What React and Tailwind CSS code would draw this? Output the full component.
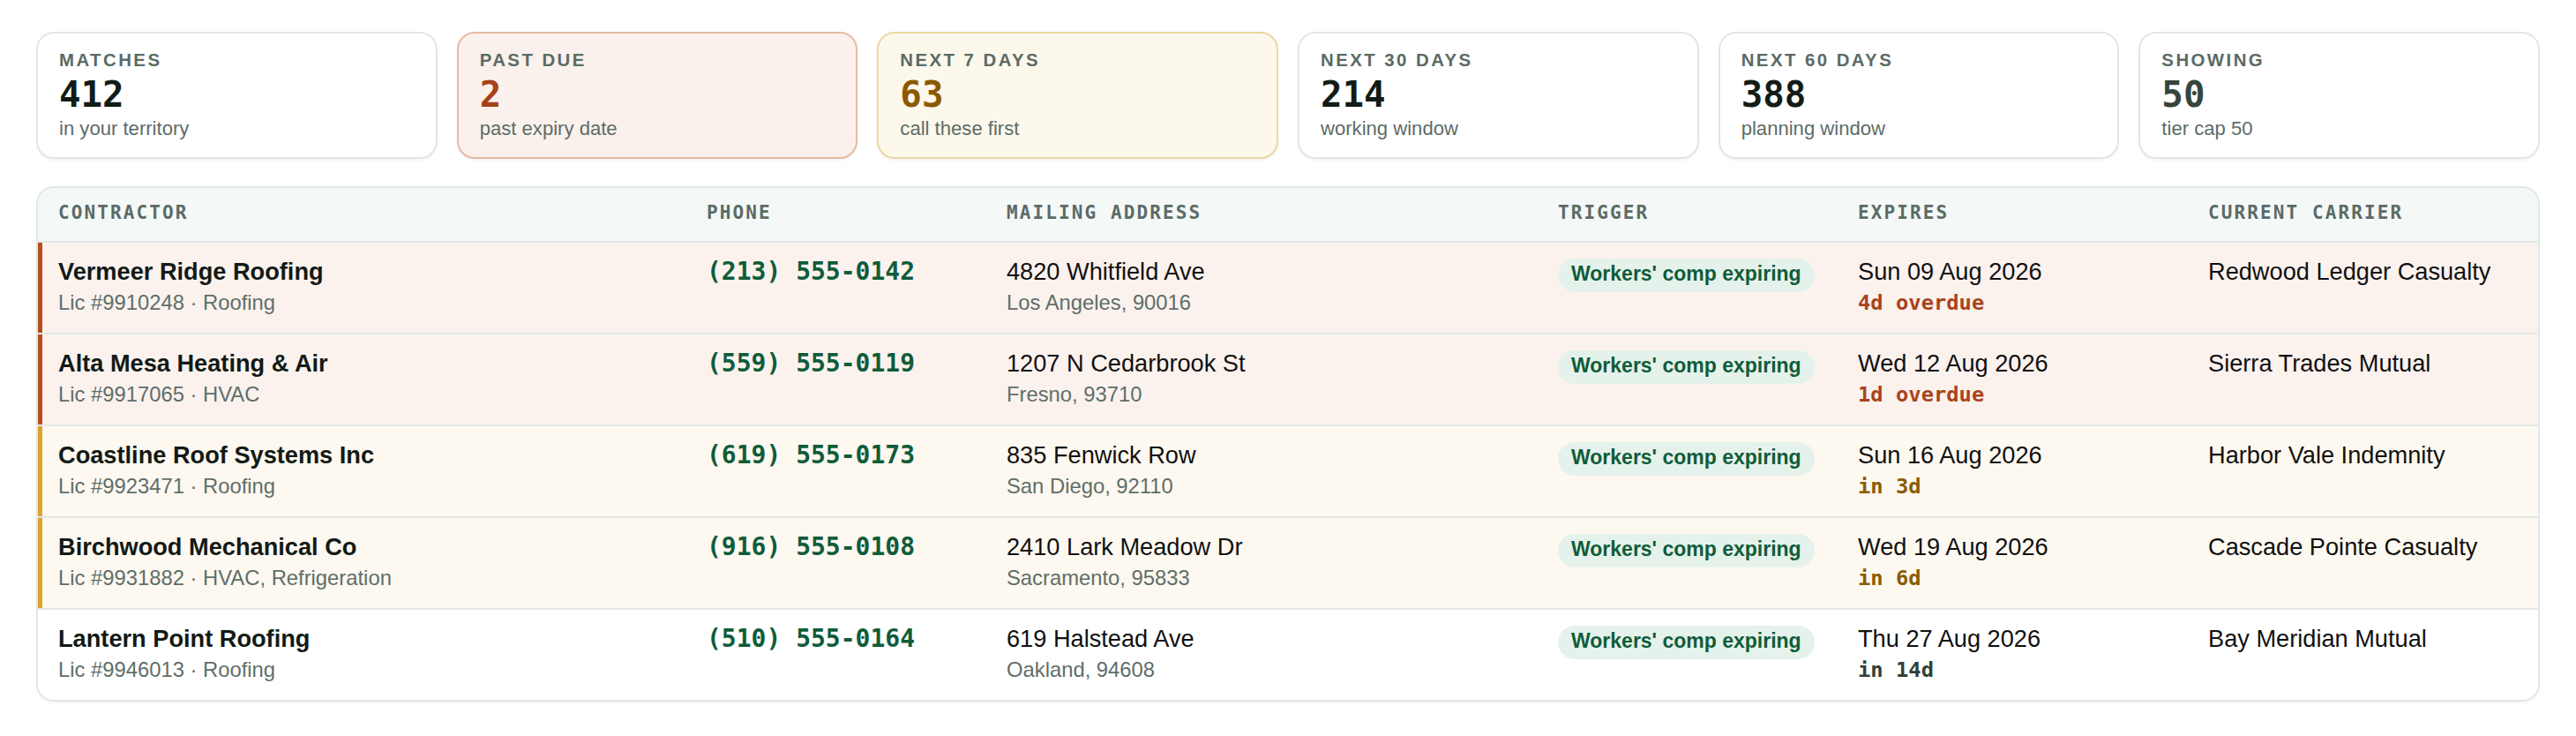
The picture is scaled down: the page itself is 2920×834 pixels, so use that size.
import React from "react";

const SANS = { fontFamily: '"Liberation Sans", Arial, sans-serif' };

const cards = [
  { label: "MATCHES", value: "412", sub: "in your territory", tone: "plain" },
  { label: "PAST DUE", value: "2", sub: "past expiry date", tone: "past" },
  { label: "NEXT 7 DAYS", value: "63", sub: "call these first", tone: "soon" },
  { label: "NEXT 30 DAYS", value: "214", sub: "working window", tone: "plain" },
  { label: "NEXT 60 DAYS", value: "388", sub: "planning window", tone: "plain" },
  { label: "SHOWING", value: "50", sub: "tier cap 50", tone: "muted" },
];

const cardBox = {
  plain: "bg-white border-[#dfe8e5]",
  muted: "bg-white border-[#dfe8e5]",
  past: "bg-[#fbf1ec] border-[#e8b9a4]",
  soon: "bg-[#fcf8ec] border-[#ecd6a2]",
};
const cardNum = {
  plain: "text-[#121c17]",
  muted: "text-[#34463c]",
  past: "text-[#a6421a]",
  soon: "text-[#8b5a00]",
};

const rows = [
  { name: "Vermeer Ridge Roofing", lic: "Lic #9910248 · Roofing", phone: "(213) 555-0142", addr: "4820 Whitfield Ave", city: "Los Angeles, 90016", date: "Sun 09 Aug 2026", due: "4d overdue", carrier: "Redwood Ledger Casualty", tone: "past" },
  { name: "Alta Mesa Heating & Air", lic: "Lic #9917065 · HVAC", phone: "(559) 555-0119", addr: "1207 N Cedarbrook St", city: "Fresno, 93710", date: "Wed 12 Aug 2026", due: "1d overdue", carrier: "Sierra Trades Mutual", tone: "past" },
  { name: "Coastline Roof Systems Inc", lic: "Lic #9923471 · Roofing", phone: "(619) 555-0173", addr: "835 Fenwick Row", city: "San Diego, 92110", date: "Sun 16 Aug 2026", due: "in 3d", carrier: "Harbor Vale Indemnity", tone: "soon" },
  { name: "Birchwood Mechanical Co", lic: "Lic #9931882 · HVAC, Refrigeration", phone: "(916) 555-0108", addr: "2410 Lark Meadow Dr", city: "Sacramento, 95833", date: "Wed 19 Aug 2026", due: "in 6d", carrier: "Cascade Pointe Casualty", tone: "soon" },
  { name: "Lantern Point Roofing", lic: "Lic #9946013 · Roofing", phone: "(510) 555-0164", addr: "619 Halstead Ave", city: "Oakland, 94608", date: "Thu 27 Aug 2026", due: "in 14d", carrier: "Bay Meridian Mutual", tone: "normal" },
];

const rowBox = {
  past: "bg-[#fbf2ee] shadow-[inset_5px_0_0_#b4501e]",
  soon: "bg-[#fdf8f0] shadow-[inset_5px_0_0_#d8a52f]",
  normal: "bg-white",
};
const dueColor = {
  past: "text-[#a8441a]",
  soon: "text-[#8a5c00]",
  normal: "text-[#2f3f37]",
};

const GRID = "grid grid-cols-[735px_340px_625px_340px_397px_1fr]";
const MONO = "font-['DejaVu_Sans_Mono',monospace]";

function Card({ c }) {
  return (
    <div className={`rounded-[20px] border-2 px-[24px] pt-[18px] pb-[19px] shadow-[0_2px_3px_rgba(30,50,40,0.05)] ${cardBox[c.tone]}`}>
      <div className="text-[20.4px] leading-[24px] font-bold tracking-[0.12em] text-[#5a6b65]">{c.label}</div>
      <div className={`${MONO} mt-[5px] text-[40.8px] leading-[44px] font-bold ${cardNum[c.tone]}`}>{c.value}</div>
      <div className="mt-[4px] text-[22.1px] leading-[26px] text-[#5d6c67]">{c.sub}</div>
    </div>
  );
}

const headers = ["CONTRACTOR", "PHONE", "MAILING ADDRESS", "TRIGGER", "EXPIRES", "CURRENT CARRIER"];

export default function App() {
  return (
    <div className="min-h-screen bg-white px-[41px] pt-[36px] pb-[39px]" style={SANS}>
      <div className="grid grid-cols-6 gap-[22px]">
        {cards.map((c) => (
          <Card key={c.label} c={c} />
        ))}
      </div>

      <div className="mt-[31px] overflow-hidden rounded-[20px] border-2 border-[#e1e9e6] bg-white shadow-[0_2px_3px_rgba(30,50,40,0.05)]">
        <div className={`${GRID} border-b-2 border-[#e1e9e6] bg-[#f4f8f7]`}>
          {headers.map((h) => (
            <div key={h} className={`${MONO} px-[23px] pt-[16px] pb-[19px] text-[21px] leading-[25px] font-bold tracking-[0.1em] text-[#5b6b66]`}>
              {h}
            </div>
          ))}
        </div>
        {rows.map((r, i) => (
          <div
            key={r.name}
            className={`${GRID} ${rowBox[r.tone]} ${i < rows.length - 1 ? "border-b-2 border-[#e1e9e6]" : ""}`}
          >
            <div className="px-[23px] pt-[16px] pb-[19px]">
              <div className="text-[27.2px] leading-[34px] font-bold text-[#121a16]">{r.name}</div>
              <div className="mt-[3px] text-[23.8px] leading-[30px] text-[#5f6e69]">{r.lic}</div>
            </div>
            <div className="px-[23px] pt-[16px]">
              <div className={`${MONO} text-[28px] leading-[34px] font-bold text-[#0f5c3a]`}>{r.phone}</div>
            </div>
            <div className="px-[23px] pt-[16px]">
              <div className="text-[27.2px] leading-[34px] text-[#111]">{r.addr}</div>
              <div className="mt-[3px] text-[23.8px] leading-[30px] text-[#5f6e69]">{r.city}</div>
            </div>
            <div className="px-[23px] pt-[18px]">
              <span className="inline-block rounded-full bg-[#e5f2eb] px-[15px] pt-[4px] pb-[8px] text-[23px] leading-[26px] font-bold text-[#0f5c3a]">
                Workers' comp expiring
              </span>
            </div>
            <div className="px-[23px] pt-[16px]">
              <div className="text-[27.2px] leading-[34px] text-[#111]">{r.date}</div>
              <div className={`${MONO} mt-[3px] text-[23.8px] leading-[30px] font-bold ${dueColor[r.tone]}`}>{r.due}</div>
            </div>
            <div className="px-[23px] pt-[16px]">
              <div className="text-[27.2px] leading-[34px] text-[#111]">{r.carrier}</div>
            </div>
          </div>
        ))}
      </div>
    </div>
  );
}
